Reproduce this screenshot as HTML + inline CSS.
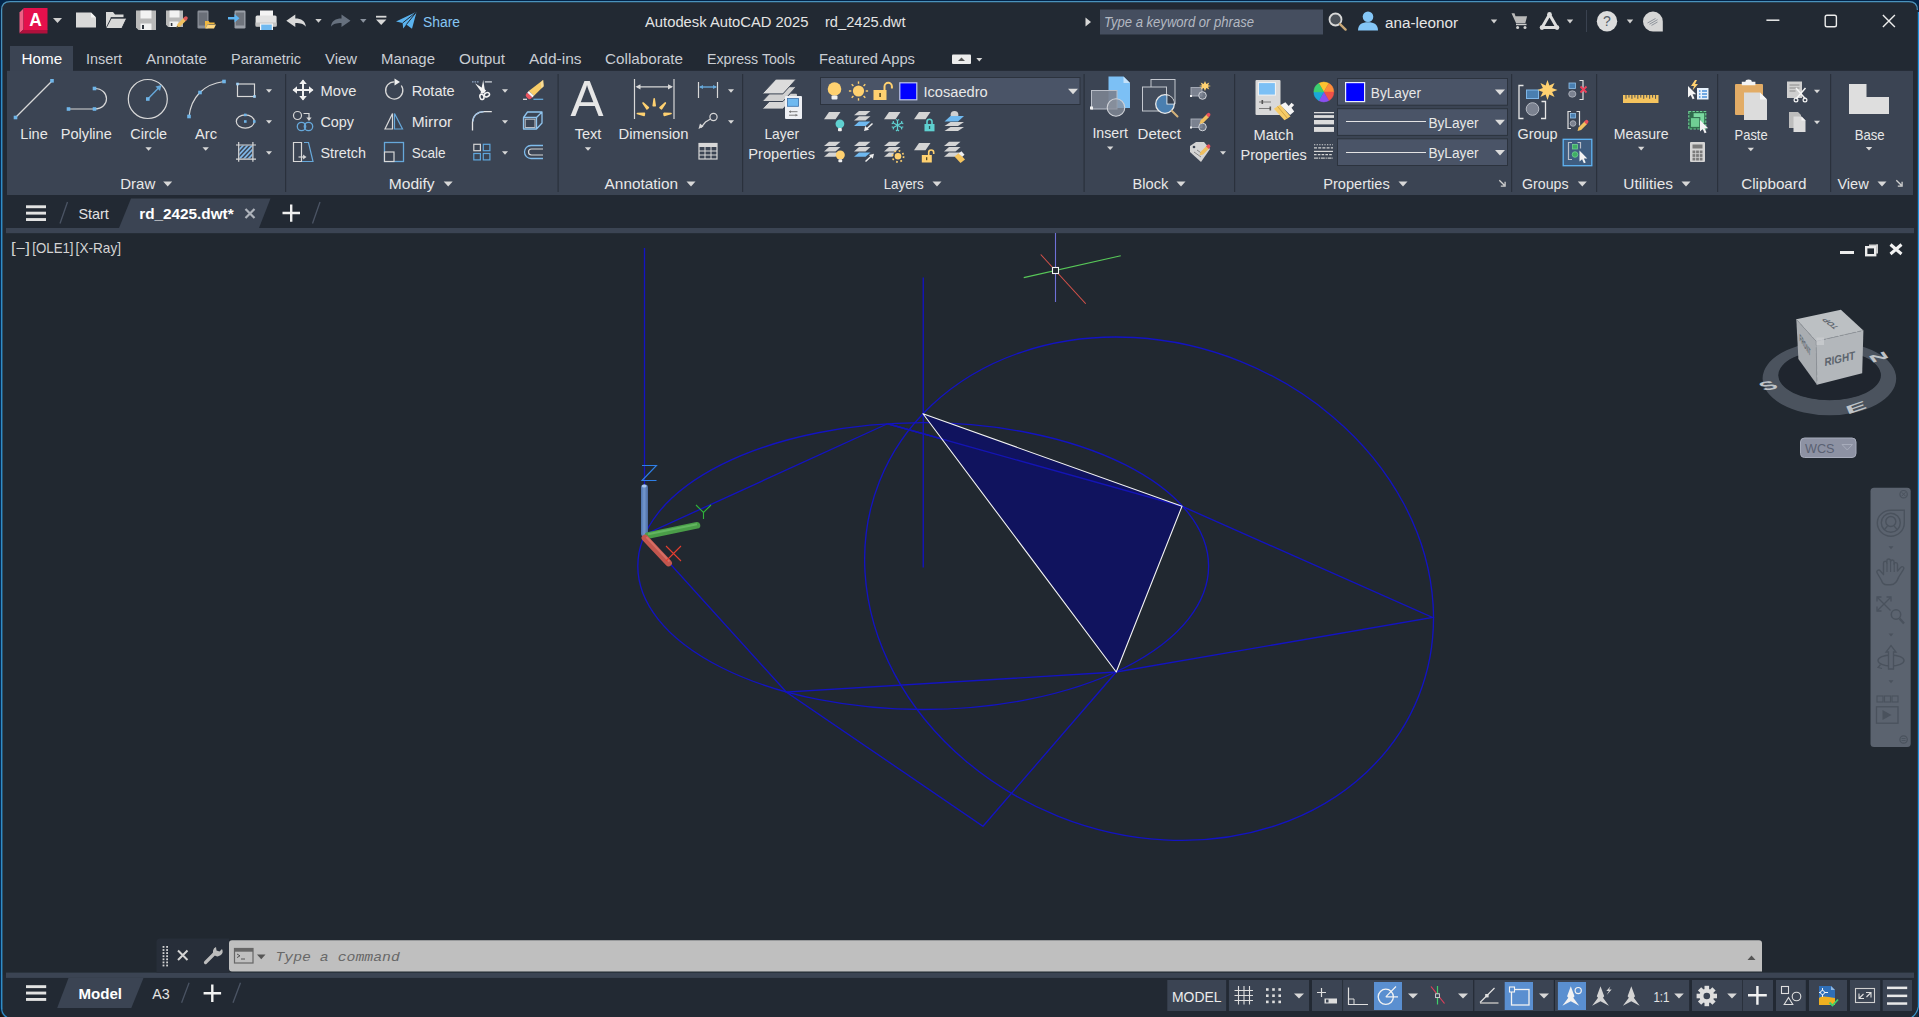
<!DOCTYPE html>
<html><head><meta charset="utf-8"><title>Autodesk AutoCAD 2025 - rd_2425.dwt</title>
<style>
html,body{margin:0;padding:0;background:#222933;overflow:hidden}
svg{display:block;font-family:"Liberation Sans",sans-serif}
text{white-space:pre}
</style></head><body>
<svg width="1919" height="1017" viewBox="0 0 1919 1017">
<rect x="0" y="0" width="1919" height="1017" fill="#02254a" />
<path d="M1 1027V9.5Q1 1 9.5 1H1909.5Q1918 1 1918 9.5V1027z" fill="#222933"/>
<rect x="2" y="233" width="1915" height="742" fill="#212830" />
<path d="M1.600 1009V10Q1.600 1.600 10 1.600H1909Q1917.4 1.600 1917.4 10" fill="none" stroke="#4a92bc" stroke-width="1.300"/>
<path d="M1918.4 12V1007" stroke="#2292dc" stroke-width="1.200"/>
<path d="M1.600 60V1007.5Q1.600 1015 8 1018" stroke="#2f8cc8" stroke-width="1.300" fill="none"/>
<path d="M0 1008Q0 1017 9 1019H0z" fill="#1a1510"/>
<path d="M1918.3 1007Q1917 1014 1911 1018" stroke="#3a9ad0" stroke-width="1.300" fill="none"/>
<g><path d="M19.5 12.5L23.5 8.5V29.5L19.5 33z" fill="#ee5f85"/><path d="M19.5 33L23.5 29.5H47.5V33.5H19.5z" fill="#b0103c"/><rect x="23.5" y="8" width="24" height="22" fill="#e5104c"/></g>
<text x="29.2" y="26.2" font-size="17.5" fill="#fff" textLength="12.6" lengthAdjust="spacingAndGlyphs" font-weight="bold" >A</text>
<path d="M53.0 18.0h9l-4.5 5z" fill="#d0d0d0"/>
<path d="M76 12.5h15l5 5v10H76z" fill="#d9d9d9" />
<path d="M91 12.5v5h5z" fill="#f4f4f4" />
<path d="M106 27.5V12h7l2 2.5h8.5v3H111l-5 10z" fill="#d9d9d9" />
<path d="M111.5 18.5H126.5l-4.5 9.5H106.5z" fill="#d9d9d9" />
<path d="M110.7 17.8H127l-5 10.4" fill="none" stroke="#222933" stroke-width="1" />
<path d="M136 10.5h20v19.5h-17.5l-2.5-2.5z" fill="#b9b9b9" />
<rect x="140.5" y="10.5" width="11" height="8" fill="#f2f2f2" />
<rect x="140.5" y="23.5" width="11" height="6.5" fill="#f2f2f2" />
<rect x="142" y="25" width="2" height="4" fill="#30363f" />
<path d="M166 10.5h17v16.5h-14.8l-2.2-2.2z" fill="#b9b9b9" />
<rect x="169.5" y="10.5" width="10" height="7" fill="#f2f2f2" />
<rect x="169.5" y="21.5" width="9" height="5.5" fill="#f2f2f2" />
<rect x="170.8" y="23" width="1.6" height="3" fill="#30363f" />
<path d="M176.5 27.5l1-3.6 6.6-6.4 2.6 2.6-6.6 6.4z" fill="#f0c060" />
<path d="M183 18.4l1.6-1.6a1.8 1.8 0 0 1 2.6 2.6l-1.6 1.6z" fill="#e05a5a" />
<path d="M176.5 27.5l.5-1.8 1.3 1.3z" fill="#444" />
<rect x="197.5" y="10.5" width="11" height="18" rx="1.2" fill="#8a8f98"/><rect x="198.8" y="12.5" width="8.4" height="13" fill="#6a6f78"/>
<path d="M205 28.5V21h3.6l1 1.4h5v1.6h-7l-2.3 4.5z" fill="#f0b840" />
<path d="M207.8 24.5H216l-2 4H205.6z" fill="#ffd780" />
<rect x="234.5" y="10.5" width="11" height="18" rx="1.2" fill="#9a9fa8"/><rect x="235.8" y="12.5" width="8.4" height="13" fill="#6f747d"/>
<path d="M228 17h6.5v-3l5 4.3-5 4.3v-3H228z" fill="#5db4f2" />
<rect x="260" y="10.5" width="13" height="6" fill="#f4f4f4" />
<rect x="255.6" y="15.5" width="21" height="11" rx="1.5" fill="#e2e2e2"/>
<rect x="255.6" y="22.5" width="21" height="4" fill="#c4c4c4" />
<rect x="260" y="23.5" width="13" height="6.5" fill="#f4f4f4" />
<rect x="261.2" y="24.6" width="10.6" height="5.4" fill="#6fb9f0" />
<path d="M286.3 20.8l9-6.3v3.9c6 0 10 2.4 10.6 8.4-2.2-3.2-5.4-3.9-10.6-3.9v4.2z" fill="#dadada" />
<path d="M315.3 18.900000000000002h6.4l-3.2 3.8z" fill="#d0d0d0"/>
<path d="M350.5 20.8l-9-6.3v3.9c-6 0-10 2.4-10.6 8.4 2.2-3.2 5.4-3.9 10.6-3.9v4.2z" fill="#66707e" />
<path d="M360.1 18.900000000000002h6.4l-3.2 3.8z" fill="#8a929e"/>
<rect x="376" y="15.8" width="10.4" height="1.8" fill="#d8d8d8" />
<path d="M376 19.4h10.4l-5.2 5.6z" fill="#d8d8d8" />
<path d="M396 21.6L416.6 11.8 412 28.8 406.3 24.6 403.2 28.6 402.6 23z" fill="#5ab3f0" />
<path d="M402.6 23L416.6 11.8 406.3 24.6" fill="none" stroke="#222933" stroke-width="1" />
<text x="423" y="27" font-size="15.5" fill="#86c6f4" textLength="37" lengthAdjust="spacingAndGlyphs" >Share</text>
<text x="645" y="27" font-size="15" fill="#e4e4e4" textLength="163.5" lengthAdjust="spacingAndGlyphs" >Autodesk AutoCAD 2025</text>
<text x="825" y="27" font-size="15" fill="#e4e4e4" textLength="80.5" lengthAdjust="spacingAndGlyphs" >rd_2425.dwt</text>
<path d="M1085.5 17.5l5.5 4.5-5.5 4.5z" fill="#d8d8d8" />
<rect x="1100" y="9.5" width="223" height="25" fill="#454e5f" />
<text x="1104" y="27" font-size="14" fill="#b4b9c2" textLength="150" lengthAdjust="spacingAndGlyphs" font-style="italic" >Type a keyword or phrase</text>
<circle cx="1335.5" cy="19.5" r="6" fill="#4a5058" stroke="#d8d8d8" stroke-width="1.8"/><path d="M1340 24.2l5.6 5.4" stroke="#c9a878" stroke-width="2.4" stroke-linecap="round"/>
<circle cx="1368" cy="16.8" r="5.3" fill="#84c6f7"/><path d="M1358 30.5c0-6 4-8.2 10-8.2s10 2.200 10 8.2z" fill="#84c6f7"/>
<text x="1385" y="28" font-size="15.5" fill="#e6e6e6" textLength="73" lengthAdjust="spacingAndGlyphs" >ana-leonor</text>
<path d="M1490.8 19.6h6.4l-3.2 3.8z" fill="#d0d0d0"/>
<path d="M1511.5 13.2h3l1 3h11.6l-1.8 7h-9.2z" fill="#b9b9b9" />
<path d="M1516 24.5h10.5" fill="none" stroke="#cfcfcf" stroke-width="1.4" />
<circle cx="1517.6" cy="27.6" r="1.5" fill="#cfcfcf"/><circle cx="1525" cy="27.600" r="1.5" fill="#cfcfcf"/>
<path d="M1549.5 14.5L1542 27.500H1557z" fill="none" stroke="#dedede" stroke-width="3" stroke-linejoin="round"/>
<circle cx="1549.5" cy="14.300" r="2.300" fill="#dedede"/><circle cx="1542" cy="27.600" r="2.300" fill="#dedede"/><circle cx="1557" cy="27.600" r="2.300" fill="#dedede"/>
<path d="M1566.8 19.6h6.4l-3.2 3.8z" fill="#d0d0d0"/>
<rect x="1586" y="10" width="1" height="22" fill="#3a4250" />
<circle cx="1607" cy="21.3" r="10.2" fill="#dcdcdc"/>
<text x="1607" y="26.2" font-size="14" fill="#555c66" text-anchor="middle" >?</text>
<path d="M1626.8 19.6h6.4l-3.2 3.8z" fill="#d0d0d0"/>
<path d="M1653 11.500a10 10 0 0 0 0 20h9.800v-10a10 10 0 0 0-9.800-10z" fill="#d6d6d6"/>
<path d="M1647.500 23l8-4.500M1649.500 24.200l8-4.500M1651.500 25.400l6-3.400" fill="none" stroke="#8d939b" stroke-width="1" />
<path d="M1766.400 20.200h13" fill="none" stroke="#ececec" stroke-width="1.5" />
<rect x="1825.200" y="15.300" width="11.200" height="11.400" rx="1.800" fill="none" stroke="#ececec" stroke-width="1.400"/>
<path d="M1882.900 14.900l12 12M1894.900 14.900l-12 12" fill="none" stroke="#ececec" stroke-width="1.4" />
<rect x="10" y="46" width="63" height="25.5" fill="#3b4453" />
<text x="21.6" y="64.2" font-size="15" fill="#ffffff" textLength="40.5" lengthAdjust="spacingAndGlyphs" >Home</text>
<text x="86" y="64.2" font-size="15" fill="#c9cdd3" textLength="36" lengthAdjust="spacingAndGlyphs" >Insert</text>
<text x="146" y="64.2" font-size="15" fill="#c9cdd3" textLength="61" lengthAdjust="spacingAndGlyphs" >Annotate</text>
<text x="231" y="64.2" font-size="15" fill="#c9cdd3" textLength="70" lengthAdjust="spacingAndGlyphs" >Parametric</text>
<text x="325" y="64.2" font-size="15" fill="#c9cdd3" textLength="32" lengthAdjust="spacingAndGlyphs" >View</text>
<text x="381" y="64.2" font-size="15" fill="#c9cdd3" textLength="54" lengthAdjust="spacingAndGlyphs" >Manage</text>
<text x="459" y="64.2" font-size="15" fill="#c9cdd3" textLength="46" lengthAdjust="spacingAndGlyphs" >Output</text>
<text x="529" y="64.2" font-size="15" fill="#c9cdd3" textLength="52.5" lengthAdjust="spacingAndGlyphs" >Add-ins</text>
<text x="605" y="64.2" font-size="15" fill="#c9cdd3" textLength="78" lengthAdjust="spacingAndGlyphs" >Collaborate</text>
<text x="707" y="64.2" font-size="15" fill="#c9cdd3" textLength="88" lengthAdjust="spacingAndGlyphs" >Express Tools</text>
<text x="819" y="64.2" font-size="15" fill="#c9cdd3" textLength="96" lengthAdjust="spacingAndGlyphs" >Featured Apps</text>
<rect x="952" y="54.500" width="19" height="9.500" rx="1" fill="#ececec"/>
<path d="M958 61l3.500-3.500 3.500 3.500z" fill="#555" />
<path d="M976.3 58.0h6l-3.0 3.6z" fill="#d8d8d8"/>
<rect x="6" y="228" width="1908" height="5.2" fill="#3b4453" />
<path d="M119 228L131 198.500H270.500L259 228z" fill="#3b4453" />
<rect x="26" y="205.3" width="20" height="2.9" fill="#e2e2e2" />
<rect x="26" y="211.7" width="20" height="2.9" fill="#e2e2e2" />
<rect x="26" y="218.1" width="20" height="2.9" fill="#e2e2e2" />
<path d="M60 223.500l7.500-21.500" fill="none" stroke="#4b5464" stroke-width="1.3" />
<text x="78.4" y="218.5" font-size="15" fill="#e2e2e2" textLength="30.5" lengthAdjust="spacingAndGlyphs" >Start</text>
<text x="139.2" y="218.5" font-size="15" fill="#ffffff" textLength="94.5" lengthAdjust="spacingAndGlyphs" font-weight="bold" >rd_2425.dwt*</text>
<path d="M245.500 209l9 9M254.500 209l-9 9" fill="none" stroke="#aeb3bb" stroke-width="2.2" />
<path d="M282.500 213h17.500M291.200 204.500v17.200" fill="none" stroke="#efefef" stroke-width="2.4" />
<path d="M312.500 223.500l7.500-21.500" fill="none" stroke="#4b5464" stroke-width="1.3" />
<rect x="7" y="70.8" width="1906" height="124.2" fill="#3b4453" />
<rect x="285.0" y="74" width="1.2" height="118" fill="#2a313c" />
<rect x="557.5" y="74" width="1.2" height="118" fill="#2a313c" />
<rect x="742.0" y="74" width="1.2" height="118" fill="#2a313c" />
<rect x="1083.5" y="74" width="1.2" height="118" fill="#2a313c" />
<rect x="1234.0" y="74" width="1.2" height="118" fill="#2a313c" />
<rect x="1511.0" y="74" width="1.2" height="118" fill="#2a313c" />
<rect x="1596.0" y="74" width="1.2" height="118" fill="#2a313c" />
<rect x="1717.0" y="74" width="1.2" height="118" fill="#2a313c" />
<rect x="1830.0" y="74" width="1.2" height="118" fill="#2a313c" />
<path d="M15.500 117.500L52 81" fill="none" stroke="#d8d8d8" stroke-width="1.2" />
<rect x="13.7" y="115.7" width="3.6" height="3.6" fill="#6fb5e8" />
<rect x="50.2" y="79.0" width="3.6" height="3.6" fill="#6fb5e8" />
<path d="M68.500 109h26c16 0 16-20.500 0-20.500" fill="none" stroke="#d8d8d8" stroke-width="1.2" />
<rect x="66.7" y="107.2" width="3.6" height="3.6" fill="#6fb5e8" />
<rect x="92.7" y="107.2" width="3.6" height="3.6" fill="#6fb5e8" />
<rect x="92.7" y="86.7" width="3.6" height="3.6" fill="#6fb5e8" />
<circle cx="147.800" cy="99" r="19.500" fill="none" stroke="#d8d8d8" stroke-width="1.2"/>
<path d="M147.800 99L159 87.500" fill="none" stroke="#66a8da" stroke-width="1.4" />
<path d="M161.500 85l-1.500 6-4.500-4.500z" fill="#66a8da" />
<rect x="146.0" y="97.2" width="3.6" height="3.6" fill="#6fb5e8" />
<path d="M189 116.500C191 98 203 84 224 81.500" fill="none" stroke="#d8d8d8" stroke-width="1.2" />
<rect x="187.2" y="114.7" width="3.6" height="3.6" fill="#6fb5e8" />
<rect x="198.2" y="90.7" width="3.6" height="3.6" fill="#6fb5e8" />
<rect x="222.2" y="79.7" width="3.6" height="3.6" fill="#6fb5e8" />
<text x="20.3" y="139" font-size="15" fill="#e8e8e8" textLength="27.5" lengthAdjust="spacingAndGlyphs" >Line</text>
<text x="60.8" y="139" font-size="15" fill="#e8e8e8" textLength="51" lengthAdjust="spacingAndGlyphs" >Polyline</text>
<text x="130.3" y="139" font-size="15" fill="#e8e8e8" textLength="36.8" lengthAdjust="spacingAndGlyphs" >Circle</text>
<text x="195" y="139" font-size="15" fill="#e8e8e8" textLength="22" lengthAdjust="spacingAndGlyphs" >Arc</text>
<path d="M145.4 147.2h6.4l-3.2 3.6z" fill="#d8d8d8"/>
<path d="M202.5 147.2h6.4l-3.2 3.6z" fill="#d8d8d8"/>
<rect x="237.500" y="84" width="17" height="12.500" fill="none" stroke="#d8d8d8" stroke-width="1.2"/>
<rect x="236.2" y="82.7" width="2.6" height="2.6" fill="#9fd0f5" />
<rect x="253.2" y="95.2" width="2.6" height="2.6" fill="#9fd0f5" />
<path d="M266.0 89.2h6l-3.0 3.6z" fill="#d8d8d8"/>
<ellipse cx="245.300" cy="121.500" rx="9" ry="6.600" fill="none" stroke="#d8d8d8" stroke-width="1.2"/>
<rect x="244.0" y="120.2" width="2.6" height="2.6" fill="#6fb5e8" />
<rect x="244.0" y="113.60000000000001" width="2.6" height="2.6" fill="#6fb5e8" />
<rect x="253.0" y="120.2" width="2.6" height="2.6" fill="#6fb5e8" />
<path d="M266.0 120.2h6l-3.0 3.6z" fill="#d8d8d8"/>
<clipPath id="hc"><rect x="239.300" y="145.600" width="13" height="13"/></clipPath>
<g clip-path="url(#hc)" stroke="#7fb8e8" stroke-width="1.700"><path d="M229.6 160l14.500-15.500"/><path d="M234.0 160l14.500-15.500"/><path d="M238.4 160l14.500-15.500"/><path d="M242.8 160l14.500-15.500"/><path d="M247.2 160l14.500-15.500"/><path d="M251.6 160l14.500-15.500"/><path d="M256.0 160l14.500-15.500"/></g>
<path d="M236 145h20M236 159.200h20M238.700 142v19.800M252.900 142v19.800" fill="none" stroke="#d8d8d8" stroke-width="1.2" />
<path d="M266.0 151.2h6l-3.0 3.6z" fill="#d8d8d8"/>
<text x="120.3" y="188.5" font-size="15" fill="#e8e8e8" textLength="35" lengthAdjust="spacingAndGlyphs" >Draw</text>
<path d="M163.2 181.5h9l-4.5 5z" fill="#d8d8d8"/>
<path d="M303 80.500v19M293.500 90h19" fill="none" stroke="#f0f0f0" stroke-width="2" />
<path d="M303 79.500l3.800 4.500h-7.600zM303 100.500l3.800-4.500h-7.600zM292.500 90l4.500-3.800v7.600zM313.500 90l-4.500-3.800v7.600z" fill="#f0f0f0" />
<text x="320.5" y="96" font-size="15" fill="#e8e8e8" textLength="36" lengthAdjust="spacingAndGlyphs" >Move</text>
<circle cx="297.500" cy="115.500" r="4" fill="none" stroke="#d8d8d8" stroke-width="1.2"/>
<path d="M303.500 113.500h5.500v5" fill="none" stroke="#d8d8d8" stroke-width="1.2" />
<path d="M309 121l-2.600-3.500h5.200z" fill="#d8d8d8" />
<circle cx="301.500" cy="126.500" r="4.200" fill="none" stroke="#66a8da" stroke-width="1.3"/><circle cx="308.500" cy="126.500" r="4.200" fill="none" stroke="#66a8da" stroke-width="1.3"/>
<text x="320.5" y="127" font-size="15" fill="#e8e8e8" textLength="33.5" lengthAdjust="spacingAndGlyphs" >Copy</text>
<path d="M293.500 142.500h8v19h-8z" fill="none" stroke="#d8d8d8" stroke-width="1.2" />
<path d="M304 142.500h4.500l4.500 19h-11" fill="none" stroke="#66a8da" stroke-width="1.2" />
<path d="M298.500 157h6" fill="none" stroke="#d8d8d8" stroke-width="1.2" />
<path d="M306.500 157l-3.400-2.500v5z" fill="#d8d8d8" />
<text x="320.5" y="158" font-size="15" fill="#e8e8e8" textLength="45.5" lengthAdjust="spacingAndGlyphs" >Stretch</text>
<path d="M401.300 85.500a8.600 8.600 0 1 1-7-3.700" fill="none" stroke="#d8d8d8" stroke-width="1.3" />
<path d="M394.500 78.500l5.500 3.600-5.500 3.400z" fill="#f0f0f0" />
<text x="411.7" y="96" font-size="15" fill="#e8e8e8" textLength="43" lengthAdjust="spacingAndGlyphs" >Rotate</text>
<path d="M392.500 113.500v15.500h-7.500z" fill="none" stroke="#d8d8d8" stroke-width="1.2" />
<path d="M394.500 113.500v15.500h8z" fill="none" stroke="#66a8da" stroke-width="1.2" />
<text x="411.7" y="127" font-size="15" fill="#e8e8e8" textLength="40.5" lengthAdjust="spacingAndGlyphs" >Mirror</text>
<rect x="384.500" y="142.500" width="19" height="19" fill="none" stroke="#66a8da" stroke-width="1.3"/><rect x="384.500" y="152" width="9.500" height="9.500" fill="#3b4453" stroke="#d8d8d8" stroke-width="1.2"/>
<text x="411.7" y="158" font-size="15" fill="#e8e8e8" textLength="34" lengthAdjust="spacingAndGlyphs" >Scale</text>
<path d="M472 81.900h7.400" fill="none" stroke="#8fa6c4" stroke-width="1.3" stroke-dasharray="1.600 .900"/>
<path d="M484.900 81.900h7" fill="none" stroke="#d0d4da" stroke-width="1.3" />
<path d="M475 83.200L486.200 90.400 482.800 94z" fill="#f4f4f4" />
<path d="M483.200 80L485.200 92.300 480.500 93.800z" fill="#f4f4f4" />
<ellipse cx="481.900" cy="96.900" rx="2" ry="2.700" transform="rotate(-15 481.900 96.900)" fill="none" stroke="#f4f4f4" stroke-width="1.500"/><ellipse cx="486.900" cy="94.700" rx="2.700" ry="2" transform="rotate(-25 486.900 94.700)" fill="none" stroke="#f4f4f4" stroke-width="1.500"/>
<path d="M502.0 89.2h6l-3.0 3.6z" fill="#d8d8d8"/>
<path d="M543.100 80L543.600 86.200 534 95.700 528.800 91z" fill="#f7cc68" />
<path d="M543.100 80l.500 6.200-2.200 2.200-.800-6z" fill="#f9dc98" />
<path d="M528.800 91L534 95.700 532.300 97.400 527.200 92.700z" fill="#f6f6f6" />
<path d="M527.200 92.700L532.300 97.400 531.300 98.300a2.600 2.600 0 0 1-3.600 0L526.400 97a2.600 2.600 0 0 1 0-3.500z" fill="#ea5560" />
<path d="M523 99.300h4" fill="none" stroke="#e8e8e8" stroke-width="1.2" />
<path d="M533.400 99.300h9.800" fill="none" stroke="#66a8da" stroke-width="1.3" />
<path d="M472.500 130.500v-8c0-7 5-10.800 12-10.800h7.300" fill="none" stroke="#e4e4e4" stroke-width="1.3" />
<path d="M473 121.500c.5-6 4.500-9.500 10.500-9.800" fill="none" stroke="#9fc2e4" stroke-width="1.3" />
<path d="M502.0 120.2h6l-3.0 3.6z" fill="#d8d8d8"/>
<path d="M523.500 117.500h13v11.500h-13zM523.500 117.500l4-5.500h14.500l-5.500 5.500M542 112v11l-5.500 6" fill="none" stroke="#8fc4ee" stroke-width="1.3" stroke-linejoin="round"/>
<path d="M525.200 119.200h9.800v8.300h-9.800z" fill="none" stroke="#b8bcc4" stroke-width="1.1" />
<rect x="473.800" y="144.300" width="6.600" height="6.400" fill="none" stroke="#d4d4d4" stroke-width="1.200"/>
<rect x="483.3" y="144.3" width="6.600" height="6.400" fill="none" stroke="#5fa6dc" stroke-width="1.200"/>
<rect x="473.8" y="153.5" width="6.600" height="6.400" fill="none" stroke="#5fa6dc" stroke-width="1.200"/>
<rect x="483.3" y="153.5" width="6.600" height="6.400" fill="none" stroke="#5fa6dc" stroke-width="1.200"/>
<path d="M502.0 151.2h6l-3.0 3.6z" fill="#d8d8d8"/>
<path d="M543 145.500h-12a6.500 6.500 0 0 0 0 13h12" fill="none" stroke="#7fbcec" stroke-width="1.3" />
<path d="M543 149h-11.500a3 3 0 0 0 0 6h11.500" fill="none" stroke="#d8d8d8" stroke-width="1.2" />
<text x="388.7" y="188.5" font-size="15" fill="#e8e8e8" textLength="46" lengthAdjust="spacingAndGlyphs" >Modify</text>
<path d="M443.7 181.5h9l-4.5 5z" fill="#d8d8d8"/>
<text x="570.5" y="116" font-size="49.5" fill="#e6e6e6" textLength="33" lengthAdjust="spacingAndGlyphs" >A</text>
<text x="574.7" y="139" font-size="15" fill="#e8e8e8" textLength="26.7" lengthAdjust="spacingAndGlyphs" >Text</text>
<path d="M584.8 147.2h6.4l-3.2 3.6z" fill="#d8d8d8"/>
<path d="M634.500 79v40M674 79v40" fill="none" stroke="#d8d8d8" stroke-width="1.2" />
<path d="M637 86.800h34.500" fill="none" stroke="#d8d8d8" stroke-width="1.2" />
<path d="M635.500 86.800l5-2.600v5.200zM673 86.800l-5-2.600v5.200z" fill="#d8d8d8" />
<path d="M-1 -10L0 -17 1 -10z" transform="translate(654.200 115.800) rotate(-82)" fill="#ffd170" stroke="#ffd170" stroke-width="1.6" stroke-linejoin="round"/>
<path d="M-1 -10L0 -17 1 -10z" transform="translate(654.200 115.800) rotate(-41)" fill="#ffd170" stroke="#ffd170" stroke-width="1.6" stroke-linejoin="round"/>
<path d="M-1 -10L0 -17 1 -10z" transform="translate(654.200 115.800) rotate(0)" fill="#ffd170" stroke="#ffd170" stroke-width="1.6" stroke-linejoin="round"/>
<path d="M-1 -10L0 -17 1 -10z" transform="translate(654.200 115.800) rotate(41)" fill="#ffd170" stroke="#ffd170" stroke-width="1.6" stroke-linejoin="round"/>
<path d="M-1 -10L0 -17 1 -10z" transform="translate(654.200 115.800) rotate(82)" fill="#ffd170" stroke="#ffd170" stroke-width="1.6" stroke-linejoin="round"/>
<text x="618.5" y="139" font-size="15" fill="#e8e8e8" textLength="70" lengthAdjust="spacingAndGlyphs" >Dimension</text>
<path d="M698.500 82v16M717.500 82v16" fill="none" stroke="#d8d8d8" stroke-width="1.2" />
<path d="M700 87h16" fill="none" stroke="#66a8da" stroke-width="1.4" />
<path d="M699 87l4-2v4zM717 87l-4-2v4z" fill="#66a8da" />
<path d="M728.0 89.2h6l-3.0 3.6z" fill="#d8d8d8"/>
<circle cx="713.500" cy="117" r="3.600" fill="none" stroke="#d8d8d8" stroke-width="1.2"/>
<path d="M710.500 119l-5 3-4.500 5.500" fill="none" stroke="#d8d8d8" stroke-width="1.2" />
<path d="M698.500 129l1.500-5.500 3.500 3z" fill="#d8d8d8" />
<path d="M728.0 120.2h6l-3.0 3.6z" fill="#d8d8d8"/>
<rect x="699" y="143.500" width="18" height="15.500" fill="none" stroke="#d8d8d8" stroke-width="1.200"/>
<rect x="699" y="143.5" width="18" height="3.5" fill="#d8d8d8" />
<path d="M699 151h18M699 155h18M705 147v12M711 147v12" fill="none" stroke="#d8d8d8" stroke-width="1" />
<text x="604.6" y="188.5" font-size="15" fill="#e8e8e8" textLength="73.5" lengthAdjust="spacingAndGlyphs" >Annotation</text>
<path d="M686.5 181.5h9l-4.5 5z" fill="#d8d8d8"/>
<path d="M776 94.3H796.300L782.900 109.1H762.100z" fill="#d6d6d6" stroke="#3b4453" stroke-width="1" />
<path d="M776 86.7H796.300L782.900 101.5H762.100z" fill="#d0d0d0" stroke="#3b4453" stroke-width="1" />
<path d="M776 79.1H796.300L782.900 93.89999999999999H762.100z" fill="#dcdcdc" stroke="#3b4453" stroke-width="1" />
<rect x="790" y="93.800" width="7" height="3" rx="1" fill="#d0d0d0"/>
<rect x="785" y="96" width="17" height="23" rx="1" fill="#eef0f4"/><rect x="787.600" y="98.500" width="11" height="7.800" fill="#6fb9f0" stroke="#3a6ea8" stroke-width=".800"/>
<path d="M789 111.700h8.500M789 115.200h8.500" fill="none" stroke="#7a7a7a" stroke-width="1" />
<path d="M789 111.700l2-1.400v2.800zM797.500 115.200l-2-1.400v2.800z" fill="#7a7a7a" />
<text x="764.4" y="139" font-size="15" fill="#e8e8e8" textLength="34.6" lengthAdjust="spacingAndGlyphs" >Layer</text>
<text x="748.3" y="158.5" font-size="15" fill="#e8e8e8" textLength="66.7" lengthAdjust="spacingAndGlyphs" >Properties</text>
<rect x="820.500" y="77.500" width="259.500" height="27" fill="#4a5467" stroke="#2c333e" stroke-width="1"/>
<circle cx="834.500" cy="89" r="6.800" fill="#ffd170"/><rect x="831.500" y="95.500" width="6" height="4" rx="1" fill="#f0f0f0"/>
<circle cx="858.500" cy="91" r="5.600" fill="#ffd170"/>
<path d="M0 -7.200V-9.600" transform="translate(858.500 91) rotate(0)" stroke="#ffd170" stroke-width="1.400"/>
<path d="M0 -7.200V-9.600" transform="translate(858.500 91) rotate(45)" stroke="#ffd170" stroke-width="1.400"/>
<path d="M0 -7.200V-9.600" transform="translate(858.500 91) rotate(90)" stroke="#ffd170" stroke-width="1.400"/>
<path d="M0 -7.200V-9.600" transform="translate(858.500 91) rotate(135)" stroke="#ffd170" stroke-width="1.400"/>
<path d="M0 -7.200V-9.600" transform="translate(858.500 91) rotate(180)" stroke="#ffd170" stroke-width="1.400"/>
<path d="M0 -7.200V-9.600" transform="translate(858.500 91) rotate(225)" stroke="#ffd170" stroke-width="1.400"/>
<path d="M0 -7.200V-9.600" transform="translate(858.500 91) rotate(270)" stroke="#ffd170" stroke-width="1.400"/>
<path d="M0 -7.200V-9.600" transform="translate(858.500 91) rotate(315)" stroke="#ffd170" stroke-width="1.400"/>
<rect x="873.500" y="90" width="13" height="10" fill="#ffd170"/><path d="M884.500 90v-3.500a3.700 3.700 0 0 1 7.400 0v2" fill="none" stroke="#ffd170" stroke-width="2"/><rect x="879.300" y="93" width="1.600" height="4" fill="#5a4a20"/>
<rect x="899.800" y="82.800" width="17" height="17" fill="#0000ff" stroke="#c0c8ec" stroke-width="1.200"/>
<text x="923.5" y="97" font-size="15.5" fill="#e8e8e8" textLength="64.2" lengthAdjust="spacingAndGlyphs" >Icosaedro</text>
<path d="M1068.0 88.75h10l-5.0 5.5z" fill="#dcdcdc"/>
<path d="M829 112h11.5l-5 7.2h-11.5z" fill="#d4d4d4" />
<circle cx="839.900" cy="123.800" r="4.400" fill="#5fd0d0"/><rect x="838" y="128" width="3.800" height="3.200" rx=".8" fill="#eee"/>
<path d="M859 111h11.5l-5 4.3h-11.5z" fill="#d4d4d4" />
<path d="M859 116.3h11.5l-5 4.3h-11.5z" fill="#d4d4d4" />
<path d="M859 121.6h11.5l-5 4.3h-11.5z" fill="#6fb9f0" />
<path d="M872.500 123.500l-6 5.500" fill="none" stroke="#eee" stroke-width="1.5" />
<path d="M864 131l1.200-5 3.800 3.800z" fill="#eee" />
<path d="M889 112h11.5l-5 7.2h-11.5z" fill="#d4d4d4" />
<path d="M-4.600 0H4.600M-4.600 0l-1.200-1.500M-4.600 0l-1.200 1.500M4.600 0l1.200-1.500M4.600 0l1.200 1.500" transform="translate(897.500 125.200) rotate(30)" stroke="#5fd0d0" stroke-width="1.200" fill="none"/>
<path d="M-4.600 0H4.600M-4.600 0l-1.200-1.500M-4.600 0l-1.200 1.500M4.600 0l1.200-1.500M4.600 0l1.200 1.500" transform="translate(897.500 125.200) rotate(90)" stroke="#5fd0d0" stroke-width="1.200" fill="none"/>
<path d="M-4.600 0H4.600M-4.600 0l-1.200-1.500M-4.600 0l-1.200 1.500M4.600 0l1.200-1.500M4.600 0l1.200 1.500" transform="translate(897.500 125.200) rotate(150)" stroke="#5fd0d0" stroke-width="1.200" fill="none"/>
<path d="M919 112h11.5l-5 7.2h-11.5z" fill="#d4d4d4" />
<rect x="924.500" y="124" width="10" height="7.300" fill="#5fd0d0"/><path d="M927 124v-2.300a2.500 2.500 0 0 1 5 0v2.300" fill="none" stroke="#5fd0d0" stroke-width="1.600"/><rect x="928.900" y="126" width="1.300" height="3" fill="#2a5a5a"/>
<circle cx="954.500" cy="114.800" r="3.900" fill="#d0d0d0"/>
<path d="M950.5 116h13.5l-6 5.5h-13.5z" fill="#6fb9f0" />
<path d="M950.5 122h13.5l-6 4h-13.5z" fill="#d4d4d4" />
<path d="M950.5 127h13.5l-6 4h-13.5z" fill="#d4d4d4" />
<path d="M829 141.8h11.5l-5 4.3h-11.5z" fill="#d4d4d4" />
<path d="M829 147.10000000000002h11.5l-5 4.3h-11.5z" fill="#d4d4d4" />
<path d="M829 152.4h11.5l-5 4.3h-11.5z" fill="#d4d4d4" />
<circle cx="840.300" cy="155" r="4.500" fill="#ffd170"/><rect x="838.400" y="159.300" width="3.800" height="3" rx=".8" fill="#eee"/>
<path d="M859 141.8h11.5l-5 4.3h-11.5z" fill="#d4d4d4" />
<path d="M859 147.10000000000002h11.5l-5 4.3h-11.5z" fill="#d4d4d4" />
<path d="M859 152.4h11.5l-5 4.3h-11.5z" fill="#6fb9f0" />
<path d="M865.500 161.500l6-5.500" fill="none" stroke="#eee" stroke-width="1.5" />
<path d="M874 153.800l-1.200 5-3.800-3.800z" fill="#eee" />
<path d="M889 141.8h11.5l-5 4.3h-11.5z" fill="#d4d4d4" />
<path d="M889 147.10000000000002h11.5l-5 4.3h-11.5z" fill="#d4d4d4" />
<path d="M889 152.4h11.5l-5 4.3h-11.5z" fill="#d4d4d4" />
<circle cx="898" cy="156.300" r="5.200" fill="#3b4453"/><circle cx="898" cy="156.300" r="3.300" fill="#ffd170"/><circle cx="898" cy="156.300" r="5.600" fill="none" stroke="#ffd170" stroke-width="1.700" stroke-dasharray="1.700 2.700"/>
<path d="M919 143h11.5l-5 7.2h-11.5z" fill="#d4d4d4" />
<rect x="921.800" y="155" width="10" height="7.500" fill="#ffd170"/><path d="M928.700 155v-2.500a2.500 2.500 0 0 1 5 0v1.500" fill="none" stroke="#ffd170" stroke-width="1.600"/><rect x="926" y="157.200" width="1.300" height="3" fill="#5a4a20"/>
<path d="M949 141.8h11.5l-5 4.3h-11.5z" fill="#d4d4d4" />
<path d="M949 147.10000000000002h11.5l-5 4.3h-11.5z" fill="#d4d4d4" />
<path d="M949 152.4h11.5l-5 4.3h-11.5z" fill="#d4d4d4" />
<path d="M954.500 156.500l4.500-3.500 6 6.500-4.500 3.500z" fill="#f5c45e" />
<path d="M958.500 153.500l3-2.200 3 3.500-2.200 2z" fill="#f0f0f0" />
<text x="883.7" y="188.5" font-size="15" fill="#e8e8e8" textLength="40" lengthAdjust="spacingAndGlyphs" >Layers</text>
<path d="M932.5 181.5h9l-4.5 5z" fill="#d8d8d8"/>
<path d="M1108.500 76.500h15l6.500 6.500v25h-21.500z" fill="#7cc0f5" />
<path d="M1123.500 76.500v6.500h6.500z" fill="#c4e2fa" />
<rect x="1091.500" y="90.500" width="25.500" height="18.500" fill="#7b8290" fill-opacity=".92" stroke="#b9bec8" stroke-width="1"/>
<circle cx="1116" cy="107.500" r="8.800" fill="#8a909c" fill-opacity=".75" stroke="#d0d3d9" stroke-width="1.100"/>
<rect x="1090" y="106.5" width="3" height="3" fill="#f0f0f0" />
<text x="1092.4" y="138" font-size="15" fill="#e8e8e8" textLength="35.5" lengthAdjust="spacingAndGlyphs" >Insert</text>
<path d="M1107.0 146.39999999999998h6.4l-3.2 3.6z" fill="#d8d8d8"/>
<rect x="1151" y="79.500" width="24" height="24" fill="#434c5b" stroke="#c4c8cf" stroke-width="1"/>
<rect x="1142.500" y="87" width="24" height="24" fill="#434c5b" stroke="#c4c8cf" stroke-width="1"/>
<circle cx="1165" cy="104" r="9.300" fill="#4a7fb0" stroke="#e8e8e8" stroke-width="1.300"/>
<path d="M1167 94.500v9.500h7.500" fill="none" stroke="#e8e8e8" stroke-width="1.1" />
<path d="M1167.500 95.200a9 9 0 0 1 6.500 8.300h-6.500z" fill="#39404d" />
<path d="M1172 111l5.500 5.500" fill="none" stroke="#d4b27a" stroke-width="2" stroke-linecap="round"/>
<text x="1137.6" y="139" font-size="15" fill="#e8e8e8" textLength="43.4" lengthAdjust="spacingAndGlyphs" >Detect</text>
<rect x="1191" y="87.5" width="11" height="8.500" fill="#7b8290" stroke="#aab0bb" stroke-width=".9"/><circle cx="1202.5" cy="95.5" r="3.800" fill="#7b8290" fill-opacity=".8" stroke="#cfd2d8" stroke-width="1"/><rect x="1190" y="95.0" width="2" height="2" fill="#eee"/>
<path d="M0 -5L1.300 -2 4.300 -3.600 3 -.8 6 0 3 .8 4.300 3.600 1.300 2 0 5 -1.300 2 -4.300 3.600 -3 .8 -6 0 -3 -.8 -4.300 -3.600 -1.300 -2z" transform="translate(1205 86)" fill="#ffd170"/>
<rect x="1191" y="119" width="11" height="8.500" fill="#7b8290" stroke="#aab0bb" stroke-width=".9"/><circle cx="1202.5" cy="127" r="3.800" fill="#7b8290" fill-opacity=".8" stroke="#cfd2d8" stroke-width="1"/><rect x="1190" y="126.5" width="2" height="2" fill="#eee"/>
<path d="M1199.500 124l1-3.600 6-6 2.600 2.600-6 6z" fill="#f0c060" />
<path d="M1206 114.800l1.300-1.300a1.800 1.800 0 0 1 2.600 2.600l-1.300 1.300z" fill="#e8505a" />
<path d="M1190 146l6-4h8l6 7-9 13-11-10z" fill="#d4d4d4" />
<circle cx="1194" cy="147" r="1.300" fill="#3b4453"/>
<path d="M1194 152l7 5M1197 150l5 3.500" fill="none" stroke="#888" stroke-width="1" />
<path d="M1199.500 155.500l1-3.600 6-6 2.600 2.600-6 6z" fill="#f0c060" />
<path d="M1206 146.300l1.300-1.300a1.800 1.800 0 0 1 2.600 2.600l-1.300 1.300z" fill="#e8505a" />
<path d="M1220.0 151.2h6l-3.0 3.6z" fill="#d8d8d8"/>
<text x="1132.5" y="188.5" font-size="15" fill="#e8e8e8" textLength="35.8" lengthAdjust="spacingAndGlyphs" >Block</text>
<path d="M1176.5 181.5h9l-4.5 5z" fill="#d8d8d8"/>
<rect x="1255.500" y="80" width="25" height="35" rx="1" fill="#d9d9d9"/><rect x="1258.400" y="82.600" width="17" height="12.500" fill="#7cc0f5" stroke="#f4f4f4" stroke-width="1"/>
<path d="M1259 102h12M1259 108.500h12" fill="none" stroke="#7a7a7a" stroke-width="1.1" />
<rect x="1261.5" y="100" width="1.6" height="4" fill="#555" />
<rect x="1269.5" y="106.5" width="1.6" height="4" fill="#555" />
<path d="M1273.900 108.700L1280.400 104.500 1290.500 116.500 1284.500 120.200z" fill="#f7cc68" />
<path d="M1277.500 106.400l10 12" fill="none" stroke="#c89a3a" stroke-width="0.8" />
<path d="M1280.400 105L1285.400 102.200 1288.700 105.900 1291.500 102.700 1294.200 105 1291.500 107.700 1294.200 111.400 1290.100 115.100z" fill="#f4f4f4" />
<text x="1253.6" y="140" font-size="15" fill="#e8e8e8" textLength="40" lengthAdjust="spacingAndGlyphs" >Match</text>
<text x="1240.5" y="159.5" font-size="15" fill="#e8e8e8" textLength="66.4" lengthAdjust="spacingAndGlyphs" >Properties</text>
<path d="M1323.800 92L1318.80 83.34A10 10 0 0 1 1328.80 83.34z" fill="#ffc230" stroke="#ffc230" stroke-width="0.4" />
<path d="M1323.800 92L1328.80 83.34A10 10 0 0 1 1333.80 92.00z" fill="#ff8c3a" stroke="#ff8c3a" stroke-width="0.4" />
<path d="M1323.800 92L1333.80 92.00A10 10 0 0 1 1328.80 100.66z" fill="#f0524a" stroke="#f0524a" stroke-width="0.4" />
<path d="M1323.800 92L1328.80 100.66A10 10 0 0 1 1318.80 100.66z" fill="#8a4ff0" stroke="#8a4ff0" stroke-width="0.4" />
<path d="M1323.800 92L1318.80 100.66A10 10 0 0 1 1313.80 92.00z" fill="#1aa8d8" stroke="#1aa8d8" stroke-width="0.4" />
<path d="M1323.800 92L1313.80 92.00A10 10 0 0 1 1318.80 83.34z" fill="#3ccf70" stroke="#3ccf70" stroke-width="0.4" />
<rect x="1314" y="112" width="20" height="1.3" fill="#dcdcdc" />
<rect x="1314" y="115.1" width="20" height="2.8" fill="#dcdcdc" />
<rect x="1314" y="120" width="20" height="4.4" fill="#dcdcdc" />
<rect x="1314" y="127" width="20" height="4.9" fill="#dcdcdc" />
<path d="M1314 144.700h19" fill="none" stroke="#d4d4d4" stroke-width="1.1" stroke-dasharray="1.300 1.300"/>
<path d="M1314 147.900h19" fill="none" stroke="#d4d4d4" stroke-width="1.1" stroke-dasharray="3 1.200"/>
<path d="M1314 151.400h19" fill="none" stroke="#d8d8d8" stroke-width="1.2" />
<path d="M1314 154.600h19" fill="none" stroke="#d4d4d4" stroke-width="1.1" stroke-dasharray="2.600 1.200"/>
<path d="M1314 158.100h19" fill="none" stroke="#c8c8c8" stroke-width="1.1" stroke-dasharray="4 .800 1.200 .800"/>
<rect x="1337.500" y="78.5" width="170" height="26.700" fill="#4a5467" stroke="#2c333e" stroke-width="1"/>
<rect x="1337.500" y="108.7" width="170" height="26.700" fill="#4a5467" stroke="#2c333e" stroke-width="1"/>
<rect x="1337.500" y="138.8" width="170" height="26.700" fill="#4a5467" stroke="#2c333e" stroke-width="1"/>
<rect x="1345.600" y="82.600" width="19" height="19" fill="#0000ff" stroke="#e8ecff" stroke-width="1.200"/>
<text x="1370.8" y="98" font-size="15.5" fill="#e8e8e8" textLength="50.2" lengthAdjust="spacingAndGlyphs" >ByLayer</text>
<path d="M1346 121.500h80M1346 152.500h80" fill="none" stroke="#e4e4e4" stroke-width="1.1" />
<text x="1428.4" y="128" font-size="15.5" fill="#e8e8e8" textLength="50.2" lengthAdjust="spacingAndGlyphs" >ByLayer</text>
<text x="1428.4" y="158" font-size="15.5" fill="#e8e8e8" textLength="50.2" lengthAdjust="spacingAndGlyphs" >ByLayer</text>
<path d="M1495.0 89.55h10l-5.0 5.5z" fill="#dcdcdc"/>
<path d="M1495.0 119.75h10l-5.0 5.5z" fill="#dcdcdc"/>
<path d="M1495.0 149.95h10l-5.0 5.5z" fill="#dcdcdc"/>
<text x="1323.3" y="188.5" font-size="15" fill="#e8e8e8" textLength="66.4" lengthAdjust="spacingAndGlyphs" >Properties</text>
<path d="M1398.5 181.5h9l-4.5 5z" fill="#d8d8d8"/>
<path d="M1499.3 180.3l5 5M1505.1 181.8v4.300h-4.300" fill="none" stroke="#cfcfcf" stroke-width="1.3" />
<path d="M1523.500 85.500h-4.500v33h4.500M1541.500 101.500h4v17h-4.500" fill="none" stroke="#e6e6e6" stroke-width="1.3" />
<rect x="1526.500" y="90" width="12" height="8.500" fill="#4a7fb0" stroke="#7fb6e6" stroke-width="1"/><circle cx="1532.500" cy="109" r="6.300" fill="#7b8290" stroke="#b4b9c2" stroke-width="1"/>
<path d="M1547.50 80.00L1549.41 85.38L1554.57 82.93L1552.12 88.09L1557.50 90.00L1552.12 91.91L1554.57 97.07L1549.41 94.62L1547.50 100.00L1545.59 94.62L1540.43 97.07L1542.88 91.91L1537.50 90.00L1542.88 88.09L1540.43 82.93L1545.59 85.38z" fill="#ffd170" />
<text x="1517.4" y="138.5" font-size="15" fill="#e8e8e8" textLength="40.2" lengthAdjust="spacingAndGlyphs" >Group</text>
<rect x="1569" y="83" width="6.500" height="5.500" fill="#4a7fb0" stroke="#8fc0ea" stroke-width=".8"/><ellipse cx="1572.3" cy="94" rx="3.600" ry="3.200" fill="#7b8290" stroke="#b4b9c2" stroke-width=".8"/>
<path d="M1579.500 80.500h3.500v19h-3.500" fill="none" stroke="#e0e0e0" stroke-width="1.2" />
<path d="M1580.500 86.500l6 6M1586.500 86.500l-6 6" fill="none" stroke="#f0405a" stroke-width="1.8" />
<path d="M1571 111.500h-3v17h3M1576.500 111.500h3v14" fill="none" stroke="#e0e0e0" stroke-width="1.2" />
<rect x="1570.500" y="113.500" width="5" height="4.500" fill="#4a7fb0" stroke="#8fc0ea" stroke-width=".8"/><circle cx="1573" cy="123.500" r="2.800" fill="#7b8290" stroke="#b4b9c2" stroke-width=".8"/>
<path d="M1577.500 131l1-3.600 6-6 2.600 2.600-6 6z" fill="#f0c060" />
<path d="M1584 121.800l1.300-1.300a1.800 1.800 0 0 1 2.600 2.600l-1.300 1.300z" fill="#e8505a" />
<rect x="1563.200" y="139.300" width="28.600" height="26.400" fill="#3f5d80" stroke="#5fb4f4" stroke-width="1.300"/>
<path d="M1572 142.500h-3.500v17h3.500M1577.500 142.500h3v6" fill="none" stroke="#b9bec8" stroke-width="1.2" />
<rect x="1572.500" y="144.500" width="5" height="4.500" fill="#3fae64" stroke="#6fd090" stroke-width=".8"/><circle cx="1575" cy="154.500" r="2.800" fill="#3fae64" stroke="#6fd090" stroke-width=".8"/>
<path d="M1579.500 150.500v11l2.600-2.300 1.800 4 1.800-.8-1.800-4h3.400z" fill="#f4f4f4" />
<text x="1522" y="188.5" font-size="15" fill="#e8e8e8" textLength="46.5" lengthAdjust="spacingAndGlyphs" >Groups</text>
<path d="M1577.8 181.5h9l-4.5 5z" fill="#d8d8d8"/>
<rect x="1623" y="95" width="35.5" height="8" fill="#f5c45e" />
<rect x="1625.56" y="95" width="0.9" height="3.8" fill="#3b4453" />
<rect x="1628.52" y="95" width="0.9" height="2.6" fill="#3b4453" />
<rect x="1631.48" y="95" width="0.9" height="3.8" fill="#3b4453" />
<rect x="1634.4399999999998" y="95" width="0.9" height="2.6" fill="#3b4453" />
<rect x="1637.3999999999999" y="95" width="0.9" height="3.8" fill="#3b4453" />
<rect x="1640.36" y="95" width="0.9" height="2.6" fill="#3b4453" />
<rect x="1643.32" y="95" width="0.9" height="3.8" fill="#3b4453" />
<rect x="1646.28" y="95" width="0.9" height="2.6" fill="#3b4453" />
<rect x="1649.24" y="95" width="0.9" height="3.8" fill="#3b4453" />
<rect x="1652.1999999999998" y="95" width="0.9" height="2.6" fill="#3b4453" />
<rect x="1655.1599999999999" y="95" width="0.9" height="3.8" fill="#3b4453" />
<text x="1613.8" y="138.5" font-size="15" fill="#e8e8e8" textLength="54.7" lengthAdjust="spacingAndGlyphs" >Measure</text>
<path d="M1638.0 146.79999999999998h6.4l-3.2 3.6z" fill="#d8d8d8"/>
<path d="M1688 86v11.500l2.700-2.400 1.900 4.200 1.900-.9-1.900-4.100h3.600z" fill="#f4f4f4" />
<path d="M1695 80l-4 6h3l-1.500 4.500 5.500-6.500h-3l2-4z" fill="#ffd170" />
<rect x="1697" y="88" width="11.500" height="11.500" fill="#e8f2fc"/>
<path d="M1699 91h1.500M1702 91h5M1699 94h1.500M1702 94h5M1699 97h1.500M1702 97h5" fill="none" stroke="#4a90d8" stroke-width="1.3" />
<rect x="1688.800" y="111.500" width="17" height="17.500" fill="#2f6a4c" stroke="#6fd494" stroke-width="1.100" stroke-dasharray="2.400 1.300"/><rect x="1693.600" y="113.200" width="10.600" height="9.800" fill="#7bd8a0"/>
<rect x="1690.400" y="117.600" width="9.400" height="9.800" fill="#6fcf94" stroke="#2f6a4c" stroke-width="1"/>
<path d="M1700 120v11.500l2.700-2.400 1.900 4.200 1.900-.9-1.900-4.100h3.600z" fill="#f4f4f4" />
<rect x="1690" y="142" width="15" height="20" rx="1" fill="#d4d4d4"/>
<rect x="1692.5" y="144.5" width="10" height="4" fill="#7a7a7a" />
<rect x="1692.5" y="150.5" width="2.8" height="2.8" fill="#7a7a7a" />
<rect x="1696.1" y="150.5" width="2.8" height="2.8" fill="#7a7a7a" />
<rect x="1699.7" y="150.5" width="2.8" height="2.8" fill="#7a7a7a" />
<rect x="1692.5" y="154.1" width="2.8" height="2.8" fill="#7a7a7a" />
<rect x="1696.1" y="154.1" width="2.8" height="2.8" fill="#7a7a7a" />
<rect x="1699.7" y="154.1" width="2.8" height="2.8" fill="#7a7a7a" />
<rect x="1692.5" y="157.7" width="2.8" height="2.8" fill="#7a7a7a" />
<rect x="1696.1" y="157.7" width="2.8" height="2.8" fill="#7a7a7a" />
<rect x="1699.7" y="157.7" width="2.8" height="2.8" fill="#7a7a7a" />
<text x="1623.3" y="188.5" font-size="15" fill="#e8e8e8" textLength="49.6" lengthAdjust="spacingAndGlyphs" >Utilities</text>
<path d="M1681.5 181.5h9l-4.5 5z" fill="#d8d8d8"/>
<rect x="1735" y="84" width="28" height="31" rx="1" fill="#e2ac66"/>
<path d="M1741.800 85.200v-3.500h3.600a3.200 2.200 0 0 1 6.400 0h3.600v3.500z" fill="#f4f4f4" />
<path d="M1744 92.500h16l7 7v20.500h-23z" fill="#dcdcdc" />
<path d="M1760 92.500v7h7z" fill="#f6f6f6" />
<text x="1734.6" y="139.5" font-size="15" fill="#e8e8e8" textLength="33" lengthAdjust="spacingAndGlyphs" >Paste</text>
<path d="M1747.6 147.7h6.4l-3.2 3.6z" fill="#d8d8d8"/>
<path d="M1787 81.500h15v16.500h-15z" fill="#cfcfcf" />
<path d="M1789.500 85h10M1789.500 88h10M1789.500 91h6" fill="none" stroke="#8a8a8a" stroke-width="1" />
<path d="M1796 88l9.500 11M1805.500 88l-9.500 11" fill="none" stroke="#f4f4f4" stroke-width="1.5" />
<circle cx="1796" cy="100" r="1.900" fill="none" stroke="#f4f4f4" stroke-width="1.200"/><circle cx="1805" cy="100" r="1.900" fill="none" stroke="#f4f4f4" stroke-width="1.200"/>
<path d="M1814.0 89.7h6l-3.0 3.6z" fill="#d8d8d8"/>
<path d="M1789 112h9l3 3v13h-12z" fill="#bdbdbd" />
<path d="M1793.500 116.500h8l4 4v11.500h-12z" fill="#dcdcdc" />
<path d="M1801.500 116.500v4h4z" fill="#f6f6f6" />
<path d="M1814.0 120.7h6l-3.0 3.6z" fill="#d8d8d8"/>
<text x="1741.2" y="188.5" font-size="15" fill="#e8e8e8" textLength="65.2" lengthAdjust="spacingAndGlyphs" >Clipboard</text>
<path d="M1849 84h17.500v13h22.500v17h-40z" fill="#dedede" />
<text x="1854.7" y="139.5" font-size="15" fill="#e8e8e8" textLength="30" lengthAdjust="spacingAndGlyphs" >Base</text>
<path d="M1865.8 147.0h6.4l-3.2 3.6z" fill="#d8d8d8"/>
<text x="1837.4" y="188.5" font-size="15" fill="#e8e8e8" textLength="31.4" lengthAdjust="spacingAndGlyphs" >View</text>
<path d="M1877.5 181.5h9l-4.5 5z" fill="#d8d8d8"/>
<path d="M1896.3 180.3l5 5M1902.1 181.8v4.300h-4.300" fill="none" stroke="#cfcfcf" stroke-width="1.3" />
<text x="10.9" y="252.8" font-size="14.5" fill="#d4d4d4" textLength="19.1" lengthAdjust="spacingAndGlyphs" >[−]</text>
<text x="32.3" y="252.8" font-size="14.5" fill="#d4d4d4" textLength="41.2" lengthAdjust="spacingAndGlyphs" >[OLE1]</text>
<text x="75.6" y="252.8" font-size="14.5" fill="#d4d4d4" textLength="45.4" lengthAdjust="spacingAndGlyphs" >[X-Ray]</text>
<rect x="1840" y="251" width="14" height="3" fill="#ececec" />
<rect x="1869" y="244.500" width="9" height="2" fill="#cfcfcf"/><rect x="1876.200" y="244.500" width="1.800" height="9" fill="#cfcfcf"/>
<rect x="1866.200" y="247.200" width="9" height="8" fill="none" stroke="#ececec" stroke-width="2.400"/>
<path d="M1890.500 244.500l11 9.500M1901.500 244.500l-11 9.500" fill="none" stroke="#f2f2f2" stroke-width="3" />
<g fill="none" stroke="#1313c2" stroke-width="1.35"><path d="M644.500 248V486"/><path d="M923.250 277.500V567.500"/><ellipse cx="923.2" cy="566.1" rx="285.4" ry="143.4"/><ellipse cx="1149.07" cy="588.7" rx="290.2" ry="245" transform="rotate(21.74 1149.07 588.7)"/><path d="M887.500 423.750L1182 506.250L1432.500 617.500L1116.250 672L786.250 692L983 826.250L1116.250 672"/><path d="M786.250 692L644 535L887.500 423.750"/></g>
<path d="M923 413.750L1182 506.250L1116.250 672z" fill="#10135e" />
<path d="M887.500 423.750L1182 506.250" fill="none" stroke="#1414b4" stroke-width="1.3" />
<path d="M923 413.750L1182 506.250L1116.250 672z" fill="none" stroke="#f4f4f4" stroke-width="1.1" stroke-linejoin="round"/>
<path d="M1055.500 233V302" fill="none" stroke="#6f70d8" stroke-width="1.1" />
<path d="M1023.750 277.600L1120.750 255.800" fill="none" stroke="#58c858" stroke-width="1.1" />
<path d="M1040.750 254.500L1085.750 303.750" fill="none" stroke="#d8524a" stroke-width="1.1" />
<rect x="1052.500" y="267.500" width="6" height="6" fill="#212830" stroke="#f4f4f4" stroke-width="1.100"/>
<defs><linearGradient id="zg" x1="0" x2="1"><stop offset="0" stop-color="#4f74ad"/><stop offset=".45" stop-color="#7398cf"/><stop offset="1" stop-color="#4a6aa0"/></linearGradient></defs>
<rect x="641" y="484.500" width="7" height="52" rx="3" fill="url(#zg)"/>
<ellipse cx="644.200" cy="486" rx="2.400" ry="1.600" fill="#a9c6ee"/>
<path d="M648 535.500L697 525.300" fill="none" stroke="#4a9d48" stroke-width="6.6" stroke-linecap="round"/>
<path d="M648 534.300L697 524.200" fill="none" stroke="#63b560" stroke-width="2" />
<path d="M645 538L668.500 563" fill="none" stroke="#c2564e" stroke-width="6.8" stroke-linecap="round"/>
<path d="M646.500 537L669.500 561.500" fill="none" stroke="#d76e64" stroke-width="2" />
<path d="M642 465.500h14.500L642 480.500h14.500" fill="none" stroke="#2f7fe6" stroke-width="1.1" />
<path d="M696 505l7.500 7.500 7.500-7.500M703.500 512.500v6.500" fill="none" stroke="#2fb43a" stroke-width="1.1" />
<path d="M666 546l15 15M681 546l-15 15" fill="none" stroke="#e63e30" stroke-width="1.1" />
<defs><radialGradient id="vcsh"><stop offset="0" stop-color="#1b212a"/><stop offset="1" stop-color="#212830"/></radialGradient></defs>
<path d="M1762.600 378.500a66.800 36.700 0 1 0 133.600 0a66.800 36.700 0 1 0-133.600 0zM1778.300 375.200a51.300 25 0 1 1 102.600 0a51.300 25 0 1 1-102.600 0z" fill="#4b535e" fill-rule="evenodd"/>
<ellipse cx="1829.600" cy="375.200" rx="50.800" ry="24.600" fill="#1f252e"/>
<path d="M1796.300 319.200L1840.900 309.800L1863.400 330.400L1816.100 341.300z" fill="#bcc0c3" />
<path d="M1796.300 319.200L1816.100 341.300L1817 384.700L1798.400 359z" fill="#a9adb1" />
<path d="M1816.100 341.300L1863.400 330.400L1862.200 373.200L1817 384.700z" fill="#b3b7bb" />
<path d="M1796.300 319.200L1816.100 341.300L1863.400 330.400M1816.100 341.300L1817 384.700" fill="none" stroke="#8e9398" stroke-width="0.9" stroke-dasharray="4 2"/>
<rect x="1816.500" y="337.500" width="7.500" height="7.500" fill="#c9ccd0" fill-opacity=".8"/>
<text transform="matrix(1 -.235 -.02 1 1824.500 366.300)" font-size="11.500" font-weight="bold" fill="#5c646d" textLength="30.500" lengthAdjust="spacingAndGlyphs">RIGHT</text>
<text transform="matrix(-.78 -.62 .95 -.25 1839.500 327.800)" font-size="8.500" font-weight="bold" fill="#5c646d" textLength="16" lengthAdjust="spacingAndGlyphs">TOP</text>
<text transform="matrix(.42 .62 0 1.100 1799.500 340.500)" font-size="9.500" font-weight="bold" fill="#5c646d" textLength="26" lengthAdjust="spacingAndGlyphs">FRONT</text>
<text transform="matrix(1.700 -.55 .45 .62 1872 363)" font-size="14.500" font-weight="bold" fill="#bfc3c7">N</text>
<text transform="matrix(1.500 -.32 .75 .72 1764.500 391)" font-size="15" font-weight="bold" fill="#bfc3c7">S</text>
<text transform="matrix(1.950 -.68 .3 .7 1847.500 414.800)" font-size="15.500" font-weight="bold" fill="#bfc3c7">E</text>
<rect x="1800.500" y="438" width="55.500" height="19.500" rx="4" fill="#8d92a3" stroke="#a7acbb" stroke-width="1"/>
<text x="1805" y="452.8" font-size="13.5" fill="#5a6172" textLength="29.5" lengthAdjust="spacingAndGlyphs" >WCS</text>
<path d="M1842 444.500h10.500l-5.250 5.500z" fill="#8d92a3" stroke="#a7acbb" stroke-width="1" />
<rect x="1870.500" y="487.700" width="40.200" height="259.300" rx="3.500" fill="#5b636f"/>
<circle cx="1903.600" cy="494.200" r="3.700" fill="none" stroke="#4a525d" stroke-width="1.200"/>
<path d="M1901.600 492.200l4 4M1905.600 492.200l-4 4" fill="none" stroke="#4a525d" stroke-width="1" />
<circle cx="1903.600" cy="739.500" r="3.700" fill="none" stroke="#4a525d" stroke-width="1.200"/>
<path d="M1901.600 738.500h4M1901.600 740.500h4" fill="none" stroke="#4a525d" stroke-width="0.9" />
<path d="M1877.300 522.800a13.500 13.500 0 0 0 27 0v-12.500h-13.500a13.500 12.500 0 0 0-13.500 12.500z" fill="none" stroke="#4a525d" stroke-width="1.4" />
<circle cx="1890.800" cy="522.800" r="9.500" fill="none" stroke="#4a525d" stroke-width="1.400"/><circle cx="1890.800" cy="521.500" r="5" fill="none" stroke="#4a525d" stroke-width="1.400"/>
<path d="M1884.500 529.500l3-3.500M1897.100 529.500l-3-3.500" fill="none" stroke="#4a525d" stroke-width="1.2" />
<path d="M1888.5 546.3h5l-2.5 3z" fill="#4a525d"/>
<path d="M1881.500 580.500l-4.300-7.500c-1.400-2.400 1.600-4 3.200-2l3.100 3.600v-11.600c0-2.400 3.400-2.400 3.400 0v-2.200c0-2.500 3.600-2.500 3.600 0v1c.2-2.400 3.600-2.300 3.600.2v2.200c.2-2.200 3.400-2 3.400.3v6.500l3.300-3.600c1.600-1.700 4 0 2.700 2l-4.800 7.600c-1.500 3.600-3.200 7.800-8.200 7.800h-4c-3 0-4.200-1.800-5-4.300z" fill="none" stroke="#4a525d" stroke-width="1.4" stroke-linejoin="round"/>
<path d="M1887 572v-9M1890.600 572v-11M1894.200 572v-9" fill="none" stroke="#4a525d" stroke-width="1.1" />
<path d="M1877.500 597.500l13 13M1890.500 597.500l-13 13" fill="none" stroke="#4a525d" stroke-width="1.3" />
<path d="M1877 601.500v-4.500h4.500M1886.500 597h4.500v4.500M1877 606.500v4.500h4.500" fill="none" stroke="#4a525d" stroke-width="1.3" />
<circle cx="1896" cy="614.500" r="4.700" fill="#5b636f" stroke="#4a525d" stroke-width="1.500"/>
<path d="M1899.500 618.500l4.500 5" fill="none" stroke="#4a525d" stroke-width="2.4" />
<path d="M1888.5 633.5h5l-2.5 3z" fill="#4a525d"/>
<ellipse cx="1891" cy="660.500" rx="13" ry="5.500" fill="none" stroke="#4a525d" stroke-width="1.400"/>
<path d="M1888.500 669v-17h-2.500l5-6.500 5 6.500h-2.500v17z" fill="#5b636f" stroke="#4a525d" stroke-width="1.3" />
<path d="M1880.500 664.500l-2.500 3 4 1" fill="none" stroke="#4a525d" stroke-width="1.2" />
<path d="M1888.5 680.3h5l-2.5 3z" fill="#4a525d"/>
<rect x="1877" y="696" width="6" height="6" fill="none" stroke="#4a525d" stroke-width="1.100"/>
<rect x="1884.5" y="696" width="6" height="6" fill="none" stroke="#4a525d" stroke-width="1.100"/>
<rect x="1892" y="696" width="6" height="6" fill="none" stroke="#4a525d" stroke-width="1.100"/>
<rect x="1876.500" y="706.800" width="21.500" height="16.400" fill="none" stroke="#4a525d" stroke-width="1.300"/>
<path d="M1882.500 710l9 5-9 5z" fill="#4a525d" />
<rect x="6" y="972.6" width="1908" height="5.3" fill="#3b4453" />
<path d="M160 938.500H229V973H156.500V942a3.500 3.500 0 0 1 3.500-3.500z" fill="#272e39"/>
<path d="M232 940.300H1759a3 3 0 0 1 3 3V971.500H232a3 3 0 0 1-3-3V943.300a3 3 0 0 1 3-3z" fill="#bfbfbf"/>
<rect x="162.6" y="946.0" width="1.8" height="1.8" fill="#d4d4d4" />
<rect x="166.2" y="946.0" width="1.8" height="1.8" fill="#d4d4d4" />
<rect x="162.6" y="949.1" width="1.8" height="1.8" fill="#d4d4d4" />
<rect x="166.2" y="949.1" width="1.8" height="1.8" fill="#d4d4d4" />
<rect x="162.6" y="952.2" width="1.8" height="1.8" fill="#d4d4d4" />
<rect x="166.2" y="952.2" width="1.8" height="1.8" fill="#d4d4d4" />
<rect x="162.6" y="955.3" width="1.8" height="1.8" fill="#d4d4d4" />
<rect x="166.2" y="955.3" width="1.8" height="1.8" fill="#d4d4d4" />
<rect x="162.6" y="958.4" width="1.8" height="1.8" fill="#d4d4d4" />
<rect x="166.2" y="958.4" width="1.8" height="1.8" fill="#d4d4d4" />
<rect x="162.6" y="961.5" width="1.8" height="1.8" fill="#d4d4d4" />
<rect x="166.2" y="961.5" width="1.8" height="1.8" fill="#d4d4d4" />
<rect x="162.6" y="964.6" width="1.8" height="1.8" fill="#d4d4d4" />
<rect x="166.2" y="964.6" width="1.8" height="1.8" fill="#d4d4d4" />
<path d="M178 950.500l9.500 9.500M187.500 950.500l-9.500 9.500" fill="none" stroke="#d4d4d4" stroke-width="2" />
<path d="M205.500 962.500l9.500-9.500" fill="none" stroke="#bdbdbd" stroke-width="3.2" stroke-linecap="round"/>
<path d="M214 954.800a5 5 0 0 1 2-7.800l.5 3.600 3 1 2.500-2.600a5 5 0 0 1-8 5.800z" fill="#bdbdbd" />
<rect x="234.500" y="948.500" width="18.500" height="14.500" fill="none" stroke="#666" stroke-width="1.200"/>
<rect x="234.5" y="948.5" width="18.5" height="3.2" fill="#666" />
<path d="M237 954l3 1.800-3 1.800M241 959h4" fill="none" stroke="#555" stroke-width="1" />
<path d="M257 954.500h8.500l-4.250 4.800z" fill="#555" />
<text x="275.4" y="961" font-size="13.5" fill="#686868" textLength="124.5" lengthAdjust="spacingAndGlyphs" font-style="italic" font-family="Liberation Mono, monospace" >Type a command</text>
<path d="M1747.500 960l4-4.500 4 4.500z" fill="#555" />
<path d="M57.200 1008L68.500 978H143.500L131.300 1008z" fill="#3b4453" />
<rect x="26" y="985.2" width="20.2" height="2.9" fill="#e2e2e2" />
<rect x="26" y="991.6" width="20.2" height="2.9" fill="#e2e2e2" />
<rect x="26" y="998" width="20.2" height="2.9" fill="#e2e2e2" />
<text x="78.4" y="998.5" font-size="15" fill="#ffffff" textLength="43.6" lengthAdjust="spacingAndGlyphs" font-weight="bold" >Model</text>
<text x="152.3" y="998.5" font-size="15" fill="#e4e4e4" textLength="17.5" lengthAdjust="spacingAndGlyphs" >A3</text>
<path d="M181.600 1002.800l7.500-20" fill="none" stroke="#4b5464" stroke-width="1.3" />
<path d="M203.600 993.200h17.500M212.300 984.500v17.400" fill="none" stroke="#f2f2f2" stroke-width="2.4" />
<path d="M233 1002.800l7.500-20" fill="none" stroke="#4b5464" stroke-width="1.3" />
<rect x="1167.3" y="980" width="58.90000000000009" height="31" fill="#3b4453" />
<rect x="1228.9" y="980" width="80.19999999999982" height="31" fill="#3b4453" />
<rect x="1312" y="980" width="30" height="31" fill="#3b4453" />
<rect x="1343" y="980" width="130.20000000000005" height="31" fill="#3b4453" />
<rect x="1474.3" y="980" width="79.5" height="31" fill="#3b4453" />
<rect x="1555" y="980" width="134.20000000000005" height="31" fill="#3b4453" />
<rect x="1692" y="980" width="50" height="31" fill="#3b4453" />
<rect x="1742.8" y="980" width="30.200000000000045" height="31" fill="#3b4453" />
<rect x="1776" y="980" width="29.799999999999955" height="31" fill="#3b4453" />
<rect x="1809" y="980" width="38" height="31" fill="#3b4453" />
<rect x="1850" y="980" width="30.200000000000045" height="31" fill="#3b4453" />
<rect x="1882.7" y="980" width="29.299999999999955" height="31" fill="#3b4453" />
<rect x="1342.2" y="980" width="0.9" height="31" fill="#2c333e" />
<rect x="1742.2" y="980" width="0.8" height="31" fill="#2c333e" />
<text x="1172" y="1001.7" font-size="15" fill="#ececec" textLength="49.5" lengthAdjust="spacingAndGlyphs" >MODEL</text>
<path d="M1238.500 986v18.500M1244 986v18.500M1249.500 986v18.500M1234.500 990.500h18.500M1234.500 995.500h18.500M1234.500 1000.500h18.500" fill="none" stroke="#dedede" stroke-width="1.1" />
<rect x="1266.0" y="988.2" width="2.6" height="2.6" fill="#dedede" />
<rect x="1272.2" y="988.2" width="2.6" height="2.6" fill="#dedede" />
<rect x="1278.4" y="988.2" width="2.6" height="2.6" fill="#dedede" />
<rect x="1266.0" y="994.4000000000001" width="2.6" height="2.6" fill="#dedede" />
<rect x="1272.2" y="994.4000000000001" width="2.6" height="2.6" fill="#dedede" />
<rect x="1278.4" y="994.4000000000001" width="2.6" height="2.6" fill="#dedede" />
<rect x="1266.0" y="1000.6" width="2.6" height="2.6" fill="#dedede" />
<rect x="1272.2" y="1000.6" width="2.6" height="2.6" fill="#dedede" />
<rect x="1278.4" y="1000.6" width="2.6" height="2.6" fill="#dedede" />
<path d="M1294.0 993.5h10l-5.0 5z" fill="#d8d8d8"/>
<path d="M1317 992.500h9M1321.500 988v9" fill="none" stroke="#dedede" stroke-width="1.2" />
<rect x="1324.500" y="998.500" width="12.500" height="5" fill="#dedede"/>
<rect x="1326" y="999.5" width="2.5" height="3" fill="#3b4453" />
<path d="M1348.500 987.500v17h19.500" fill="none" stroke="#dedede" stroke-width="1.2" />
<path d="M1348.500 999h5.500v5.500" fill="none" stroke="#dedede" stroke-width="1" />
<rect x="1374" y="982" width="28" height="28" fill="#5a8fd0" />
<circle cx="1385.800" cy="996.800" r="7.600" fill="none" stroke="#f2f2f2" stroke-width="1.300"/>
<path d="M1385.800 996.800L1396 986.500M1385.800 996.800H1398" fill="none" stroke="#f2f2f2" stroke-width="1.2" />
<path d="M1408.0 993.5h10l-5.0 5z" fill="#d8d8d8"/>
<path d="M1431 986.500l13.500 17" fill="none" stroke="#e0405a" stroke-width="1.2" />
<path d="M1437.500 986v18.500" fill="none" stroke="#3fcf6a" stroke-width="1.2" />
<rect x="1435.600" y="993.800" width="3.800" height="3.800" fill="#3b4453" stroke="#dedede" stroke-width=".9"/>
<path d="M1458.0 993.5h10l-5.0 5z" fill="#d8d8d8"/>
<path d="M1480 1003h18.500" fill="none" stroke="#b4b4b4" stroke-width="1.6" />
<path d="M1480 1002.500l14.500-14.500" fill="none" stroke="#dedede" stroke-width="1.2" />
<rect x="1485.2" y="994" width="3.4" height="3.4" fill="#dedede" />
<rect x="1504.7" y="982" width="28.3" height="28" fill="#5a8fd0" />
<rect x="1511.500" y="989.500" width="17.500" height="15.500" fill="none" stroke="#f2f2f2" stroke-width="1.300"/><rect x="1509.500" y="987" width="5" height="5" fill="#5a8fd0" stroke="#f2f2f2" stroke-width="1.100"/>
<path d="M1539.0 993.5h10l-5.0 5z" fill="#d8d8d8"/>
<rect x="1557.9" y="982" width="28.1" height="28" fill="#5a8fd0" />
<path d="M1570.8 986.300L1574.5 996.300L1573.3 997.800L1579.2 1005.800L1570.8 1001.300L1562.3999999999999 1005.800L1568.3 997.800L1567.1 996.300z" fill="#f2f2f2" />
<circle cx="1578.200" cy="990.600" r="3.100" fill="none" stroke="#f2f2f2" stroke-width="1.200"/>
<path d="M1600.5 986.300L1604.2 996.300L1603.0 997.800L1608.9 1005.800L1600.5 1001.300L1592.1 1005.800L1598.0 997.800L1596.8 996.300z" fill="#d4d4d4" />
<path d="M1610.300 986.500l-4 4.500h2.600l-2.200 4 5-5.500h-2.600z" fill="#d4d4d4" />
<path d="M1631.3 986.300L1635.0 996.300L1633.8 997.800L1639.7 1005.800L1631.3 1001.300L1622.8999999999999 1005.800L1628.8 997.800L1627.6 996.300z" fill="#d4d4d4" />
<text x="1653.4" y="1001.8" font-size="15" fill="#e4e4e4" textLength="16" lengthAdjust="spacingAndGlyphs" >1:1</text>
<path d="M1674.2 993.5h9.6l-4.8 5z" fill="#d8d8d8"/>
<g transform="translate(1706.800 996)"><rect x="-2.300" y="-10.200" width="4.600" height="5" transform="rotate(0)" fill="#dedede"/><rect x="-2.300" y="-10.200" width="4.600" height="5" transform="rotate(45)" fill="#dedede"/><rect x="-2.300" y="-10.200" width="4.600" height="5" transform="rotate(90)" fill="#dedede"/><rect x="-2.300" y="-10.200" width="4.600" height="5" transform="rotate(135)" fill="#dedede"/><rect x="-2.300" y="-10.200" width="4.600" height="5" transform="rotate(180)" fill="#dedede"/><rect x="-2.300" y="-10.200" width="4.600" height="5" transform="rotate(225)" fill="#dedede"/><rect x="-2.300" y="-10.200" width="4.600" height="5" transform="rotate(270)" fill="#dedede"/><rect x="-2.300" y="-10.200" width="4.600" height="5" transform="rotate(315)" fill="#dedede"/><circle r="7.300" fill="#dedede"/><circle r="3.300" fill="#3b4453"/></g>
<path d="M1727.2 993.5h9.6l-4.8 5z" fill="#d8d8d8"/>
<path d="M1748 995.300h18.800M1757.400 986v18.700" fill="none" stroke="#f2f2f2" stroke-width="2.4" />
<rect x="1781.500" y="986.500" width="7" height="7" fill="none" stroke="#dedede" stroke-width="1.100"/><circle cx="1796.500" cy="996.500" r="4.300" fill="none" stroke="#dedede" stroke-width="1.100"/>
<path d="M1788.500 997.500l4.300 7h-8.600z" fill="none" stroke="#dedede" stroke-width="1.1" />
<path d="M1819 986h12l4 4v15h-16z" fill="#2f6fb8" />
<path d="M1831 986v4h4z" fill="#8fb6e0" />
<path d="M1819 998c4-3 8-1 16 0v7h-16z" fill="#f0b020" />
<path d="M1819 992.500h9M1822.500 988v9" fill="none" stroke="#f4f4f4" stroke-width="1" />
<circle cx="1822.500" cy="992.500" r="2" fill="#2f6fb8" stroke="#f4f4f4" stroke-width=".9"/>
<path d="M1829.500 1002.500l3 3 5.500-6" fill="none" stroke="#3fcf6a" stroke-width="1.8" />
<rect x="1855.500" y="988.500" width="19" height="14" fill="none" stroke="#cfcfcf" stroke-width="1.100"/>
<path d="M1866 992.500h5v5M1871 992.500l-4.500 4.500M1864 998.500h-5v-5M1859 998.500l4.500-4.500" fill="none" stroke="#dedede" stroke-width="1.1" />
<rect x="1887" y="986.6" width="20.2" height="2.5" fill="#e8e8e8" />
<rect x="1887" y="994.6" width="20.2" height="2.5" fill="#e8e8e8" />
<rect x="1887" y="1002.3" width="20.2" height="2.5" fill="#e8e8e8" />
</svg>
</body></html>
